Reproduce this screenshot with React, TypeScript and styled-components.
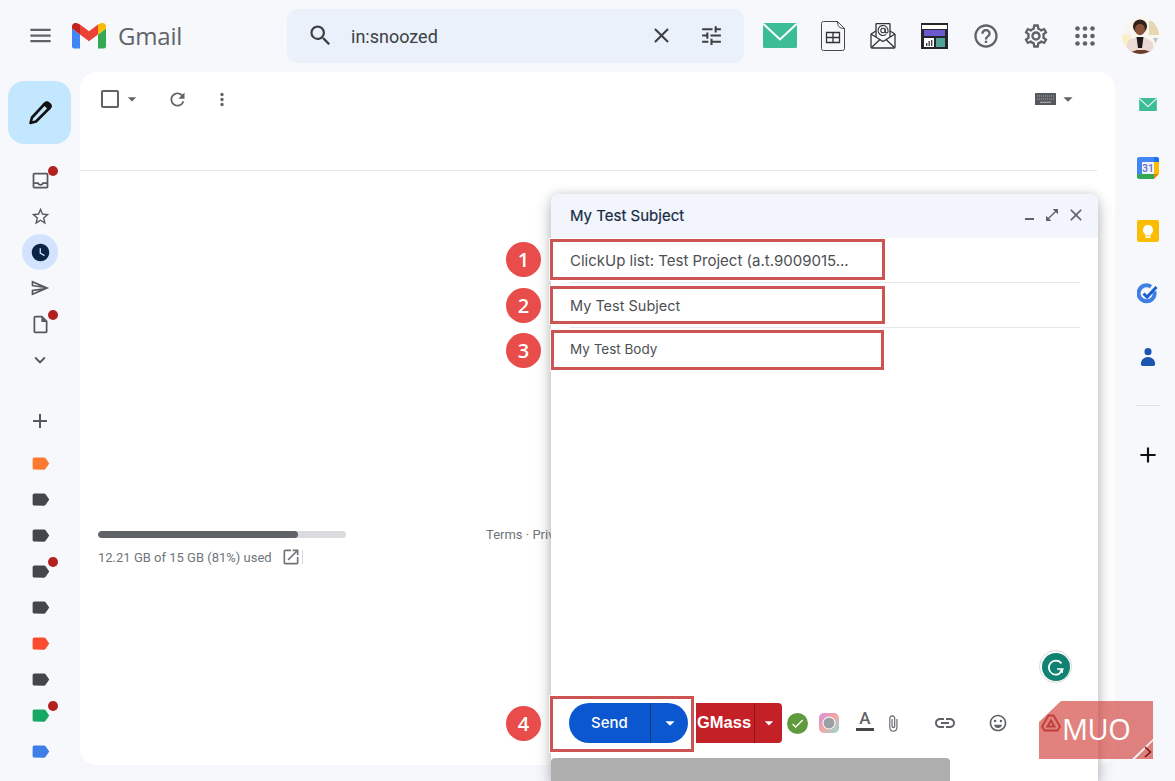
import React from "react";
import styled, { createGlobalStyle } from "styled-components";
import {
  MdMenu, MdSearch, MdClose, MdTune, MdHelpOutline, MdOutlineSettings, MdCheckBoxOutlineBlank,
  MdArrowDropDown, MdRefresh, MdMoreVert, MdOutlineInbox, MdStarBorder, MdWatchLater,
  MdOutlineInsertDriveFile, MdExpandMore, MdAdd, MdOpenInNew, MdOpenInFull, MdAttachFile, MdLink,
  MdOutlineEmojiEmotions, MdCheck, MdOutlineSend,
} from "react-icons/md";

const Global = createGlobalStyle`
  html, body { margin: 0; padding: 0; height: 100%; overflow: hidden; }
  #root { height: 100%; }
  * { box-sizing: border-box; }
`;

const Page = styled.div`
  position: relative;
  width: 1175px;
  height: 781px;
  overflow: hidden;
  background: #f6f8fc;
  color: #444746;
  font-family: Roboto, "Liberation Sans", sans-serif;
  display: flex;
  flex-direction: column;
`;

const Header = styled.header`
  height: 72px;
  flex: none;
  display: flex;
  align-items: center;
  padding-bottom: 1px;
`;

const Brand = styled.div`
  width: 287px;
  flex: none;
  display: flex;
  align-items: center;
  padding-left: 16px;
  color: #5f6368;
`;
const MenuSlot = styled.div`
  width: 48px;
  margin-right: 8px;
  display: flex;
  justify-content: center;
`;
const BrandName = styled.span`
  margin-left: 12px;
  font-family: "Open Sans", Roboto, sans-serif;
  font-size: 24px;
  letter-spacing: -0.2px;
  color: #5f6368;
`;

const Search = styled.div`
  width: 457px;
  height: 54px;
  flex: none;
  background: #eaf1fb;
  border-radius: 10px;
  display: flex;
  align-items: center;
  gap: 25px;
  padding: 0 20px;
  color: #3c4043;
`;
const SearchText = styled.span`
  margin-left: -8px;
  padding-top: 2px;
  flex: 1;
  font-size: 18px;
  color: #3c4043;
`;

const HeadTools = styled.div`
  display: flex;
  align-items: center;
  margin-left: 11px;
`;
const Slot = styled.div<{ $w: number }>`
  width: ${(p) => p.$w}px;
  display: flex;
  justify-content: center;
  align-items: center;
  color: #5f6368;
`;

const Body = styled.div`
  flex: 1;
  display: flex;
  min-height: 0;
`;

const LeftRail = styled.nav`
  width: 80px;
  flex: none;
  display: flex;
  flex-direction: column;
  align-items: center;
  padding-top: 9px;
`;
const Compose = styled.div`
  width: 63px;
  height: 63px;
  margin: 0 1px 18px 0;
  flex: none;
  border-radius: 16px;
  background: #c2e7ff;
  display: flex;
  align-items: center;
  justify-content: center;
`;
const RailItem = styled.div<{ $gap?: number; $active?: boolean; $color?: string }>`
  position: relative;
  width: 36px;
  height: 36px;
  flex: none;
  margin-top: ${(p) => p.$gap ?? 0}px;
  border-radius: 50%;
  display: flex;
  align-items: center;
  justify-content: center;
  color: ${(p) => p.$color ?? "#55595e"};
  background: ${(p) => (p.$active ? "#d3e3fd" : "transparent")};
`;
const Dot = styled.span`
  position: absolute;
  top: 4px;
  right: 0;
  width: 10px;
  height: 10px;
  border-radius: 50%;
  background: #b3201f;
`;

const Main = styled.main`
  width: 1035px;
  height: 693px;
  flex: none;
  background: #fff;
  border-radius: 16px;
  display: flex;
  flex-direction: column;
`;
const MainBar = styled.div`
  height: 99px;
  flex: none;
  margin-right: 18px;
  border-bottom: 1px solid #e4e6e9;
  display: flex;
  align-items: flex-start;
  padding: 15px 18px 0 18px;
  color: #5f6368;
`;
const BarSlot = styled.div<{ $w: number }>`
  width: ${(p) => p.$w}px;
  height: 24px;
  display: flex;
  align-items: center;
  justify-content: center;
`;
const BarEnd = styled.div`
  margin-left: auto;
  height: 24px;
  display: flex;
  align-items: center;
  gap: 1px;
  color: #5f6368;
`;
const Footer = styled.div`
  margin-top: 356px;
  position: relative;
  display: flex;
  padding-left: 18px;
`;
const Storage = styled.div`
  width: 248px;
  padding-top: 4px;
`;
const Track = styled.div`
  height: 7px;
  border-radius: 4px;
  background: #d9dbde;
  overflow: hidden;
`;
const Fill = styled.div`
  height: 100%;
  border-radius: 4px;
  background: #5f6368;
`;
const StorageLine = styled.div`
  margin-top: 9px;
  display: flex;
  align-items: center;
  font-size: 13px;
  color: #70757a;
`;
const StorageIcon = styled.span`
  display: flex;
  margin-left: 9px;
  color: #70757a;
`;
const Sep = styled.span`
  width: 1px;
  height: 14px;
  margin-left: 1px;
  background: #d6d8db;
`;
const Terms = styled.div`
  margin-left: 140px;
  font-size: 13px;
  color: #70757a;
  white-space: nowrap;
`;

const RightRail = styled.aside`
  flex: 1;
  display: flex;
  flex-direction: column;
  align-items: center;
  padding: 1px 0 0 6px;
`;
const AddonSlot = styled.div<{ $h: number }>`
  height: ${(p) => p.$h}px;
  flex: none;
  width: 100%;
  display: flex;
  align-items: center;
  justify-content: center;
`;
const Rule = styled.div`
  width: 24px;
  height: 1px;
  margin: 17px 0 33px;
  background: #dfe2e6;
`;

const Window = styled.section`
  position: absolute;
  left: 551px;
  top: 194px;
  right: 77px;
  bottom: 0;
  background: #fff;
  border-radius: 8px 8px 0 0;
  box-shadow: 0 6px 16px rgba(60, 64, 67, 0.32), 0 0 8px rgba(60, 64, 67, 0.16);
  display: flex;
  flex-direction: column;
`;
const WindowHead = styled.div`
  height: 44px;
  flex: none;
  background: #f2f6fc;
  border-radius: 8px 8px 0 0;
  display: flex;
  align-items: center;
  padding: 0 12px 2px 19px;
`;
const WindowTitle = styled.span`
  flex: 1;
  font-family: Inter, Roboto, sans-serif;
  font-size: 15px;
  font-weight: 400;
  color: #172b45;
  -webkit-text-stroke: 0.2px #172b45;
`;
const WindowControls = styled.div`
  display: flex;
  align-items: center;
  gap: 6px;
  color: #5f6368;
`;
const MinBar = styled.span`
  width: 9px;
  height: 2px;
  margin: 8px 4px 0 0;
  background: #5f6368;
`;
const Field = styled.div<{ $size: number }>`
  height: 45px;
  flex: none;
  margin: 0 18px 0 19px;
  border-bottom: 1px solid #e6e8eb;
  display: flex;
  align-items: center;
  font-family: Inter, Roboto, sans-serif;
  font-size: ${(p) => p.$size}px;
  color: #4d5052;
`;
const Message = styled.div`
  flex: 1;
  padding: 13px 19px;
  font-family: Inter, Roboto, sans-serif;
  font-size: 13.5px;
  color: #4d5052;
`;
const Tools = styled.div`
  height: 40px;
  flex: none;
  display: flex;
  align-items: center;
  padding-left: 18px;
  color: #5f6368;
`;
const Send = styled.div`
  width: 119px;
  height: 40px;
  flex: none;
  display: flex;
  border-radius: 20px;
  overflow: hidden;
  background: #0b57d0;
  color: #fff;
`;
const SendLabel = styled.div`
  width: 82px;
  display: flex;
  align-items: center;
  justify-content: center;
  padding-bottom: 2px;
  border-right: 1px solid #0a3a80;
  font-family: Inter, Roboto, sans-serif;
  font-size: 15px;
  font-weight: 500;
`;
const Caret = styled.div`
  flex: 1;
  display: flex;
  align-items: center;
  justify-content: center;
`;
const GMass = styled.div`
  width: 86px;
  height: 40px;
  margin-left: 8px;
  flex: none;
  display: flex;
  border-radius: 0 4px 4px 0;
  background: #c32127;
  color: #fff;
`;
const GMassLabel = styled.div`
  width: 59px;
  display: flex;
  align-items: center;
  justify-content: flex-start;
  padding: 0 0 2px 1px;
  border-right: 1px solid #8f1418;
  font-family: "Liberation Sans", sans-serif;
  font-size: 16.5px;
  font-weight: 700;
`;
const ToolSlot = styled.div<{ $w: number }>`
  width: ${(p) => p.$w}px;
  height: 40px;
  flex: none;
  display: flex;
  align-items: center;
  justify-content: center;
`;
const Verified = styled.span`
  width: 21px;
  height: 21px;
  border-radius: 50%;
  background: #5f9a3c;
  color: #fff;
  display: flex;
  align-items: center;
  justify-content: center;
`;
const TextColor = styled.span`
  width: 18px;
  margin-top: -5px;
  display: flex;
  flex-direction: column;
  align-items: center;
  font-family: Roboto, sans-serif;
  font-size: 17px;
  line-height: 15px;
  font-weight: 500;
  color: #5f6368;
  &::after {
    content: "";
    width: 18px;
    height: 3px;
    margin-top: 2px;
    background: #444746;
  }
`;
const WindowFoot = styled.div`
  width: 399px;
  height: 23px;
  margin-top: 15px;
  flex: none;
  border-radius: 4px 4px 0 0;
  background: #aeaeae;
`;

const Grammarly = styled.div`
  position: absolute;
  left: 1039px;
  top: 650px;
  width: 33px;
  height: 33px;
  border-radius: 50%;
  background: #fff;
  border: 1px solid #d5dadd;
  display: flex;
  align-items: center;
  justify-content: center;
`;

const Mark = styled.div<{ $x: number; $y: number; $w: number; $h: number }>`
  position: absolute;
  left: ${(p) => p.$x}px;
  top: ${(p) => p.$y}px;
  width: ${(p) => p.$w}px;
  height: ${(p) => p.$h}px;
  border: 3px solid #cc5553;
  box-shadow: 0 0 0 1px rgba(255, 255, 255, 0.8);
  pointer-events: none;
`;
const Step = styled.div<{ $y: number }>`
  position: absolute;
  left: 506px;
  top: ${(p) => p.$y}px;
  width: 35px;
  height: 35px;
  border-radius: 50%;
  background: #e84c4b;
  color: #fff;
  display: flex;
  align-items: center;
  justify-content: center;
  font-family: "Open Sans", sans-serif;
  font-size: 20px;
  font-weight: 600;
`;

const Watermark = styled.div`
  position: absolute;
  left: 1039px;
  top: 701px;
  width: 114px;
  height: 58px;
  background: rgba(209, 66, 60, 0.66);
  clip-path: polygon(22px 0, 100% 0, 100% 38px, 93px 100%, 0 100%, 0 21px);
`;
const WatermarkText = styled.span`
  position: absolute;
  left: 23px;
  top: 8px;
  font-family: "Open Sans", Lato, sans-serif;
  font-size: 29px;
  line-height: 40px;
  font-weight: 400;
  letter-spacing: -0.5px;
  color: #fff;
`;
const WatermarkTab = styled.div`
  position: absolute;
  left: 1135px;
  top: 741px;
  width: 18px;
  height: 18px;
  background: rgba(209, 66, 60, 0.66);
  clip-path: polygon(100% 0, 100% 100%, 0 100%);
`;
const TabArrow = styled.svg`
  position: absolute;
  left: 1144px;
  top: 746px;
`;

const GmailLogo = () => (
  <svg width="34" height="26" viewBox="0 0 34 26">
    <path fill="#4285f4" d="M2.3 25.5H8v-14L0 5.5v17.7a2.3 2.3 0 0 0 2.3 2.3z" />
    <path fill="#34a853" d="M26 25.5h5.7a2.3 2.3 0 0 0 2.3-2.3V5.5l-8 6z" />
    <path fill="#fbbc04" d="M26 1.5v10l8-6v-2c0-3-3.4-4.7-5.8-2.9z" />
    <path fill="#ea4335" d="M8 11.5v-10l9 6.8 9-6.8v10l-9 6.8z" />
    <path fill="#c5221f" d="M0 3.5v2l8 6v-10L5.8.6C3.4-1.2 0 .5 0 3.5z" />
  </svg>
);

const PenIcon = () => (
  <svg width="26" height="26" viewBox="0 0 26 26" fill="none" stroke="#111" strokeWidth="2.600" strokeLinejoin="round">
    <path d="M18 3.500a2.500 2.500 0 0 1 3.500 0l1 1a2.500 2.500 0 0 1 0 3.500L9 21.500 3.500 23 5 17.500Z" />
    <path fill="#111" stroke="none" d="M15.500 4l6.500 6.500 2-2.500c1-1.200 1-2.800 0-4l-1.500-1.500c-1.200-1-2.800-1-4 0Z" />
  </svg>
);

const GreenMail = ({ w, h }: { w: number; h: number }) => (
  <svg width={w} height={h} viewBox="0 0 34 25">
    <path fill="#3dbd96" d="M1.5 0H32.5A1.5 1.5 0 0 1 34 1.5V23.5A1.5 1.500 0 0 1 32.5 25H1.5A1.5 1.5 0 0 1 0 23.5V1.5A1.5 1.5 0 0 1 1.5 0Z" />
    <path fill="none" stroke="#fff" strokeWidth="2" d="M0.5 1L17 16.5L33.5 1" />
  </svg>
);

const SheetIcon = () => (
  <svg width="24" height="30" viewBox="0 0 24 30" fill="none" stroke="#333" strokeWidth="0.9">
    <path d="M2.5.5H16.5L23.5 7.5V27.5a2 2 0 0 1-2 2H2.5a2 2 0 0 1-2-2V2.5a2 2 0 0 1 2-2Z" />
    <path d="M16.5.5C16.5 5 18 7.500 23.5 7.500" />
    <path strokeWidth="1.300" d="M5.500 11.500H18.500V21.500H5.500ZM5.500 16.500H18.500M12 11.500V21.500" />
  </svg>
);

const AtMailIcon = () => (
  <svg width="26" height="26" viewBox="0 0 26 26" fill="none" stroke="#333" strokeWidth="1.300">
    <path d="M1 11L6 8M25 11L20 8M1 11V24a1 1 0 0 0 1 1H24a1 1 0 0 0 1-1V11" />
    <path d="M6 14V1.500a1 1 0 0 1 1-1H19a1 1 0 0 1 1 1V14" />
    <path d="M1 11L13 18.500L25 11M1.500 24.500L10 16.500M24.500 24.500L16 16.500" />
    <circle cx="13" cy="7.500" r="2.200" strokeWidth="1.100" />
    <path strokeWidth="1.100" d="M15.200 5.500v3a1.400 1.400 0 0 0 2.800 0V7.500a5 5 0 1 0-2 4" />
  </svg>
);

const LayoutIcon = () => (
  <svg width="27" height="26" viewBox="0 0 27 26">
    <rect width="27" height="26" fill="#26262a" />
    <rect x="1" y="2" width="25" height="4" fill="#fff" />
    <rect x="3" y="7" width="21" height="6" fill="#6a5acd" />
    <rect x="3" y="15" width="10" height="9" fill="#fff" />
    <rect x="5" y="20" width="1.400" height="3" fill="#444" />
    <rect x="7.500" y="18" width="1.400" height="5" fill="#444" />
    <rect x="10" y="17" width="1.400" height="6" fill="#444" />
    <rect x="15" y="15" width="9" height="9" fill="#4fa39a" />
  </svg>
);

const AppsIcon = () => (
  <svg width="20" height="20" viewBox="0 0 20 20" fill="#5f6368">
    {[2.5, 10, 17.5].flatMap((y) =>
      [2.5, 10, 17.5].map((x) => <circle key={`${x}-${y}`} cx={x} cy={y} r="2.300" />)
    )}
  </svg>
);

const KeyboardIcon = () => (
  <svg width="21" height="12" viewBox="0 0 21 12">
    <rect width="21" height="12" rx="0.500" fill="#55595e" />
    <path stroke="#a9adb1" strokeWidth="1.200" strokeDasharray="1 1" d="M2 3H19M2 6H19" />
    <path stroke="#a9adb1" strokeWidth="1.200" d="M5 9.300H16" />
  </svg>
);

const Avatar = () => (
  <svg width="37" height="37" viewBox="0 0 37 37">
    <defs>
      <clipPath id="avatarClip">
        <circle cx="18.500" cy="18.500" r="18.500" />
      </clipPath>
    </defs>
    <g clipPath="url(#avatarClip)">
      <rect width="37" height="37" fill="#f8f5ee" />
      <rect x="0" y="18" width="9" height="13" fill="#f8f0c4" />
      <rect x="27" y="4" width="10" height="14" fill="#e6d7b2" />
      <path fill="#ecd9d6" d="M5 37V27c1-5 7-7 13-7s11 3 13 7v10Z" />
      <circle cx="18" cy="9.500" r="7" fill="#33201c" />
      <ellipse cx="18" cy="12.500" rx="5" ry="5.800" fill="#8a5238" />
      <path fill="#22181a" d="M14.500 20h7L20 31h-4Z" />
      <path fill="#6b3d2a" d="M9 35l6-2 8 0 6 2v2H9Z" />
      <path fill="#b4c6d4" d="M31 21h5l-2.500 5Z" />
    </g>
  </svg>
);

const LabelIcon = ({ color }: { color: string }) => (
  <svg width="21" height="21" viewBox="0 0 24 24">
    <path fill={color} d="M17.630 5.840C17.270 5.330 16.670 5 16 5L5 5.010C3.900 5.010 3 5.900 3 7v10c0 1.100.9 1.990 2 1.990L16 19c.67 0 1.270-.33 1.630-.84L22 12l-4.370-6.160z" />
  </svg>
);

const CalendarIcon = () => (
  <svg width="22" height="22" viewBox="0 0 22 22">
    <rect width="22" height="22" rx="2" fill="#fff" />
    <path fill="#4285f4" d="M0 2a2 2 0 0 1 2-2H17V5H5V17H0Z" />
    <path fill="#fbbc04" d="M17 5h5v12h-5Z" />
    <path fill="#34a853" d="M0 17H17v5H2a2 2 0 0 1-2-2Z" />
    <path fill="#1a73e8" d="M17 0h3a2 2 0 0 1 2 2V5H17Z" />
    <path fill="#ea8600" d="M17 17h5l-5 5Z" />
    <rect x="5" y="5" width="12" height="12" fill="#eef2fd" />
    <text x="11" y="15" textAnchor="middle" fontFamily="Roboto, sans-serif" fontSize="10" fontWeight="500" fill="#5b6fc5">31</text>
  </svg>
);

const KeepIcon = () => (
  <svg width="22" height="22" viewBox="0 0 22 22">
    <rect width="22" height="22" rx="2" fill="#fbbc04" />
    <path fill="#fff" d="M11 5a5 5 0 0 0-3 9v1.500h6V14a5 5 0 0 0-3-9Z" />
    <rect x="8.500" y="16.300" width="5" height="1.700" fill="#fff" />
  </svg>
);

const TasksIcon = () => (
  <svg width="22" height="22" viewBox="0 0 22 22" fill="none">
    <path stroke="#3f7fe3" strokeWidth="4" d="M17.400 8.500A8 8 0 1 1 14 3.600" />
    <path stroke="#1a5fd0" strokeWidth="3" d="M6.500 10.500l3.500 3.500L19.500 4" />
  </svg>
);

const ContactsIcon = () => (
  <svg width="16" height="20" viewBox="0 0 18 22">
    <circle cx="9" cy="5" r="4" fill="#1a56b0" />
    <path fill="#1a56b0" d="M1 19c0-4.500 3.500-8 8-8s8 3.500 8 8c0 1.500-1 2-2 2H3c-1 0-2-.5-2-2Z" />
  </svg>
);

const InstaLike = () => (
  <svg width="20" height="20" viewBox="0 0 20 20">
    <defs>
      <linearGradient id="ring" x1="0" y1="0" x2="1" y2="1">
        <stop offset="0" stopColor="#d58be0" />
        <stop offset="0.500" stopColor="#f2a7a0" />
        <stop offset="1" stopColor="#8fdcd8" />
      </linearGradient>
    </defs>
    <rect width="20" height="20" rx="5" fill="url(#ring)" />
    <circle cx="10" cy="10" r="6.500" fill="#fff" />
    <circle cx="10" cy="10" r="5.500" fill="#9aa0a6" />
  </svg>
);

const DriveGlyph = () => (
  <svg width="20" height="18" viewBox="0 0 20 18" fill="none" stroke="#a33a38" strokeWidth="2">
    <path d="M7.500 1.500h5L19 12.500 16.500 16.500h-13L1 12.500Z" />
    <path d="M10 6.500l3.500 6h-7Z" />
  </svg>
);

const GrammarlyGlyph = () => (
  <svg width="28" height="28" viewBox="0 0 28 28">
    <circle cx="14" cy="14" r="14" fill="#0f8272" />
    <path fill="none" stroke="#fff" strokeWidth="1.700" d="M19.500 10.500A7 7 0 1 0 20.700 16H15" />
    <path fill="#fff" d="M17 18l4-2v4Z" />
  </svg>
);

const railTop = [
  { icon: <MdOutlineInbox size={21} />, dot: true },
  { icon: <MdStarBorder size={21} /> },
  { icon: <MdWatchLater size={21} />, active: true, color: "#0b2547" },
  { icon: <MdOutlineSend size={20} /> },
  { icon: <MdOutlineInsertDriveFile size={21} />, dot: true },
  { icon: <MdExpandMore size={22} /> },
];

const labels = [
  { color: "#fb7a2f" },
  { color: "#43464b" },
  { color: "#43464b" },
  { color: "#43464b", dot: true },
  { color: "#43464b" },
  { color: "#fb4c2f" },
  { color: "#43464b" },
  { color: "#16a765", dot: true },
  { color: "#3f7de8" },
  { color: "#c9cdd2" },
];

const marks = [
  { x: 550, y: 239, w: 335, h: 41 },
  { x: 550, y: 286, w: 335, h: 38 },
  { x: 551, y: 330, w: 333, h: 40 },
  { x: 550, y: 696, w: 144, h: 56 },
];
const steps = [
  { n: 1, y: 242 },
  { n: 2, y: 288 },
  { n: 3, y: 333 },
  { n: 4, y: 706 },
];

export default function App() {
  return (
    <Page>
      <Global />
      <Header>
        <Brand>
          <MenuSlot>
            <MdMenu size={27} />
          </MenuSlot>
          <GmailLogo />
          <BrandName>Gmail</BrandName>
        </Brand>
        <Search>
          <MdSearch size={27} />
          <SearchText>in:snoozed</SearchText>
          <MdClose size={25} />
          <MdTune size={25} />
        </Search>
        <HeadTools>
          <Slot $w={50}><GreenMail w={34} h={25} /></Slot>
          <Slot $w={56}><SheetIcon /></Slot>
          <Slot $w={44}><AtMailIcon /></Slot>
          <Slot $w={58}><LayoutIcon /></Slot>
          <Slot $w={46}><MdHelpOutline size={28} /></Slot>
          <Slot $w={54}><MdOutlineSettings size={28} /></Slot>
          <Slot $w={44}><AppsIcon /></Slot>
          <Slot $w={66}><Avatar /></Slot>
        </HeadTools>
      </Header>
      <Body>
        <LeftRail>
          <Compose>
            <PenIcon />
          </Compose>
          {railTop.map((r, i) => (
            <RailItem key={i} $active={r.active} $color={r.color}>
              {r.icon}
              {r.dot && <Dot />}
            </RailItem>
          ))}
          <RailItem $gap={25}>
            <MdAdd size={24} />
          </RailItem>
          {labels.map((l, i) => (
            <RailItem key={i} $gap={i === 0 ? 6 : 0}>
              <LabelIcon color={l.color} />
              {l.dot && <Dot />}
            </RailItem>
          ))}
        </LeftRail>
        <Main>
          <MainBar>
            <BarSlot $w={24}><MdCheckBoxOutlineBlank size={24} /></BarSlot>
            <BarSlot $w={20}><MdArrowDropDown size={22} /></BarSlot>
            <BarSlot $w={70}><MdRefresh size={21} /></BarSlot>
            <BarSlot $w={20}><MdMoreVert size={21} /></BarSlot>
            <BarEnd>
              <KeyboardIcon />
              <MdArrowDropDown size={22} />
            </BarEnd>
          </MainBar>
          <Footer>
            <Storage>
              <Track>
                <Fill style={{ width: `${(200 / 248) * 100}%` }} />
              </Track>
              <StorageLine>
                12.21 GB of 15 GB (81%) used
                <StorageIcon><MdOpenInNew size={20} /></StorageIcon>
                <Sep />
              </StorageLine>
            </Storage>
            <Terms>Terms · Privacy · Program Policies</Terms>
          </Footer>
        </Main>
        <RightRail>
          <AddonSlot $h={63}><GreenMail w={18} h={13} /></AddonSlot>
          <AddonSlot $h={63}><CalendarIcon /></AddonSlot>
          <AddonSlot $h={63}><KeepIcon /></AddonSlot>
          <AddonSlot $h={63}><TasksIcon /></AddonSlot>
          <AddonSlot $h={63}><ContactsIcon /></AddonSlot>
          <Rule />
          <AddonSlot $h={32}><MdAdd size={26} color="#111" /></AddonSlot>
        </RightRail>
      </Body>

      <Window>
        <WindowHead>
          <WindowTitle>My Test Subject</WindowTitle>
          <WindowControls>
            <MinBar />
            <MdOpenInFull size={16} />
            <MdClose size={20} />
          </WindowControls>
        </WindowHead>
        <Field $size={15}>ClickUp list: Test Project (a.t.9009015...</Field>
        <Field $size={14.5}>My Test Subject</Field>
        <Message>My Test Body</Message>
        <Tools>
          <Send>
            <SendLabel>Send</SendLabel>
            <Caret><MdArrowDropDown size={22} /></Caret>
          </Send>
          <GMass>
            <GMassLabel>GMass</GMassLabel>
            <Caret><MdArrowDropDown size={20} /></Caret>
          </GMass>
          <ToolSlot $w={30}><Verified><MdCheck size={15} /></Verified></ToolSlot>
          <ToolSlot $w={34}><InstaLike /></ToolSlot>
          <ToolSlot $w={38}><TextColor>A</TextColor></ToolSlot>
          <ToolSlot $w={18}><MdAttachFile size={25} /></ToolSlot>
          <ToolSlot $w={86}><MdLink size={24} /></ToolSlot>
          <ToolSlot $w={20}><MdOutlineEmojiEmotions size={24} /></ToolSlot>
          <ToolSlot $w={86}><DriveGlyph /></ToolSlot>
        </Tools>
        <WindowFoot />
      </Window>

      <Grammarly><GrammarlyGlyph /></Grammarly>

      {marks.map((m, i) => (
        <Mark key={i} $x={m.x} $y={m.y} $w={m.w} $h={m.h} />
      ))}
      {steps.map((s) => (
        <Step key={s.n} $y={s.y}>{s.n}</Step>
      ))}

      <Watermark>
        <WatermarkText>MUO</WatermarkText>
      </Watermark>
      <WatermarkTab />
      <TabArrow width="8" height="12" viewBox="0 0 8 12" fill="none" stroke="#7a1010" strokeWidth="1.500">
        <path d="M1 1l5.500 5-5.500 5" />
      </TabArrow>
    </Page>
  );
}
